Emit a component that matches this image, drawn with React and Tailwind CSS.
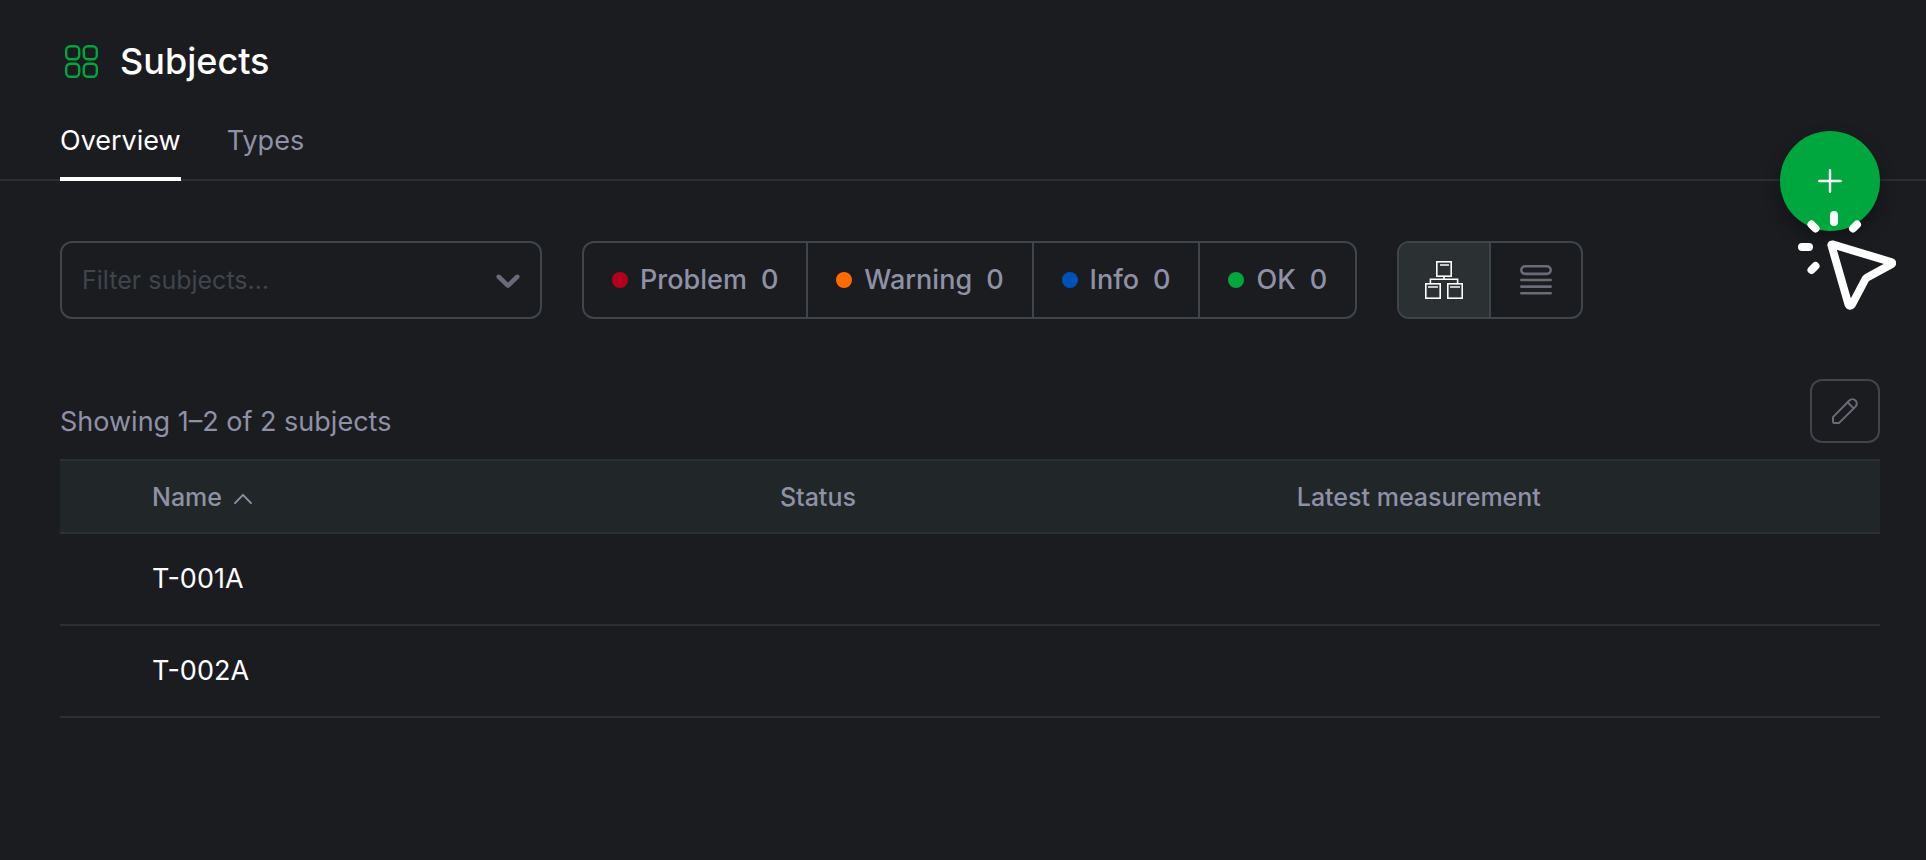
import React from "react";

const statuses = [
  { label: "Problem", count: 0, dot: "bg-[#b3001e]" },
  { label: "Warning", count: 0, dot: "bg-[#ff6b00]" },
  { label: "Info", count: 0, dot: "bg-[#0052b8]" },
  { label: "OK", count: 0, dot: "bg-[#00a63e]" },
];

const subjects = ["T-001A", "T-002A"];

function SubjectsIcon() {
  return (
    <svg width="33" height="33" viewBox="0 0 33 33" fill="none" stroke="#00a63e" strokeWidth="2.4" aria-hidden="true">
      <rect x="1.2" y="1.2" width="13" height="13" rx="4" />
      <rect x="18.8" y="1.2" width="13" height="13" rx="4" />
      <rect x="1.2" y="18.8" width="13" height="13" rx="4" />
      <rect x="18.8" y="18.8" width="13" height="13" rx="4" />
    </svg>
  );
}

function ChevronIcon() {
  return (
    <svg width="40" height="40" viewBox="0 0 20 20" fill="#6b6a79" aria-hidden="true">
      <path d="M4.516 7.548c0.436-0.446 1.043-0.481 1.576 0l3.908 3.747 3.908-3.747c0.533-0.481 1.141-0.446 1.574 0 0.436 0.445 0.408 1.197 0 1.615-0.406 0.418-4.695 4.502-4.695 4.502-0.217 0.223-0.502 0.335-0.787 0.335s-0.57-0.112-0.789-0.335c0 0-4.287-4.084-4.695-4.502s-0.436-1.17 0-1.615z" />
    </svg>
  );
}

function TreeIcon() {
  return (
    <svg width="38" height="38" viewBox="0 0 38 38" fill="none" stroke="#ffffff" strokeWidth="1.6" aria-hidden="true">
      <rect x="11.8" y="0.8" width="14.4" height="14.4" />
      <rect x="0.8" y="22.8" width="14.4" height="14.4" />
      <rect x="22.8" y="22.8" width="14.4" height="14.4" />
      <path d="M19 15.2v3M5.4 22.5v-4.3h27.2v4.3" />
      <path d="M15 4h9M3 26h10M25 26h10" stroke="#c5c8ca" strokeWidth="2" />
    </svg>
  );
}

function ListIcon() {
  return (
    <svg width="32" height="30" viewBox="0 0 32 30" fill="none" stroke="#6b6a79" strokeWidth="2.6" strokeLinecap="round" aria-hidden="true">
      <rect x="1.3" y="1.3" width="29.4" height="7.6" rx="3.8" />
      <path d="M1.3 15h29.4M1.3 21.600h29.4M1.3 28.200h29.4" />
    </svg>
  );
}

function PencilIcon() {
  return (
    <svg width="26" height="26" viewBox="0 0 26 26" fill="none" stroke="#6b6a79" strokeWidth="2" strokeLinecap="round" strokeLinejoin="round" aria-hidden="true">
      <path d="M1.4 18.6 17.4 2.5a4.3 4.3 0 0 1 6.1 6.1L7.4 24.6Q6.9 25 6.2 25H2.2Q1 25 1 23.8V19.8Q1 19.1 1.4 18.6Z" />
      <path d="m15.6 4.3 6.1 6.1" />
    </svg>
  );
}

function ClickCursor() {
  return (
    <svg
      className="pointer-events-none absolute -right-4 top-[78px]"
      width="100"
      height="102"
      viewBox="0 0 100 102"
      fill="none"
      stroke="#ffffff"
      strokeWidth="8"
      strokeLinecap="round"
      strokeLinejoin="round"
      aria-hidden="true"
    >
      <path d="M38 6v7M15.500 15.500l4 4M61 15.500l-4 4M6 38h7M15.500 61l4-4" />
      <path d="M35.500 36.500Q35 35 37 35.500L95 53Q97.500 54 95 55.500L72 68Q70.500 68.800 69.500 70L56 95.500Q54 98 52.500 95.500Z" />
    </svg>
  );
}

export default function App() {
  return (
    <div className="min-h-screen bg-[#1b1c20] pb-16 font-[Inter,'Liberation_Sans',sans-serif] text-[28px] leading-[42px] text-[#8f91a7]">
      <header>
        <div className="flex items-center gap-[22px] pl-[65px] pt-10">
          <SubjectsIcon />
          <h1 className="text-[36px] font-medium leading-[42px] text-white">Subjects</h1>
        </div>
        <div className="relative mt-[38px] border-b-2 border-[#2b3033] pl-[60px] pr-[46px]">
          <nav className="-mb-[2px] flex gap-[46px]">
            <a href="#overview" aria-current="page" className="border-b-4 border-white pb-[15px] text-[27px] text-white">
              Overview
            </a>
            <a href="#types" className="border-b-4 border-transparent pb-[15px] text-[27px]">
              Types
            </a>
          </nav>
          <div className="absolute -bottom-[52px] right-[46px]">
            <button
              type="button"
              aria-label="Add subject"
              className="flex size-[100px] items-center justify-center rounded-full bg-[#00a63e] shadow-[0_8px_16px_rgba(0,0,0,0.35)]"
            >
              <svg width="24" height="24" viewBox="0 0 24 24" stroke="#ffffff" strokeWidth="2.4" strokeLinecap="round" aria-hidden="true">
                <path d="M12 1.3v21.4M1.3 12h21.4" />
              </svg>
            </button>
            <ClickCursor />
          </div>
        </div>
      </header>

      <main className="pl-[60px] pr-[46px]">
        <div className="mt-[60px] flex flex-wrap gap-10">
          <div className="flex h-[78px] w-[482px] items-center rounded-xl border-2 border-[#3e454d] pl-5 pr-3">
            <input
              type="text"
              aria-label="Filter subjects"
              placeholder="Filter subjects…"
              className="min-w-0 flex-1 bg-transparent text-[25px] text-white outline-none placeholder:text-[#3e454d]"
            />
            <button type="button" aria-label="Show subjects">
              <ChevronIcon />
            </button>
          </div>

          <div className="flex h-[78px] divide-x-2 divide-[#3e454d] overflow-hidden rounded-xl border-2 border-[#3e454d]">
            {statuses.map((s) => (
              <button key={s.label} type="button" className="flex items-center px-7 text-[27px] font-medium">
                <span className={`mr-3 size-4 rounded-full ${s.dot}`} />
                <span className="mr-[14px]">{s.label}</span>
                <span>{s.count}</span>
              </button>
            ))}
          </div>

          <div className="flex h-[78px] divide-x-2 divide-[#3e454d] overflow-hidden rounded-xl border-2 border-[#3e454d]">
            <button type="button" aria-label="Tree view" aria-pressed="true" className="flex w-[92px] items-center justify-center bg-[#2b3033]">
              <TreeIcon />
            </button>
            <button type="button" aria-label="List view" aria-pressed="false" className="flex w-[90px] items-center justify-center">
              <ListIcon />
            </button>
          </div>
        </div>

        <div className="mt-[60px] flex items-end justify-between">
          <p className="text-[27px]">Showing 1–2 of 2 subjects</p>
          <button
            type="button"
            aria-label="Edit columns"
            className="flex h-16 w-[70px] items-center justify-center rounded-xl border-2 border-[#3e454d]"
          >
            <PencilIcon />
          </button>
        </div>

        <table className="mt-4 w-full table-fixed border-separate border-spacing-0 text-left">
          <thead>
            <tr className="bg-[#212628] text-[25px] *:h-[75px] *:border-y-2 *:border-[#2b3033] *:font-medium">
              <td className="w-[76px]" />
              <th scope="col" aria-sort="ascending" className="w-[34.5%] px-4">
                <button type="button" className="flex items-center gap-3">
                  Name
                  <svg className="mt-1" width="18" height="12" viewBox="0 0 18 12" fill="none" stroke="currentColor" strokeWidth="1.8" strokeLinecap="round" strokeLinejoin="round" aria-hidden="true">
                    <path d="m1 10.2 8-8.4 8 8.4" />
                  </svg>
                </button>
              </th>
              <th scope="col" className="w-[28.4%] px-4">Status</th>
              <th scope="col" className="px-4">Latest measurement</th>
            </tr>
          </thead>
          <tbody>
            {subjects.map((name) => (
              <tr key={name} className="text-[27px] text-white *:h-[92px] *:border-b-2 *:border-[#2b3033]">
                <td />
                <td className="px-4">{name}</td>
                <td />
                <td />
              </tr>
            ))}
          </tbody>
        </table>
      </main>
    </div>
  );
}
